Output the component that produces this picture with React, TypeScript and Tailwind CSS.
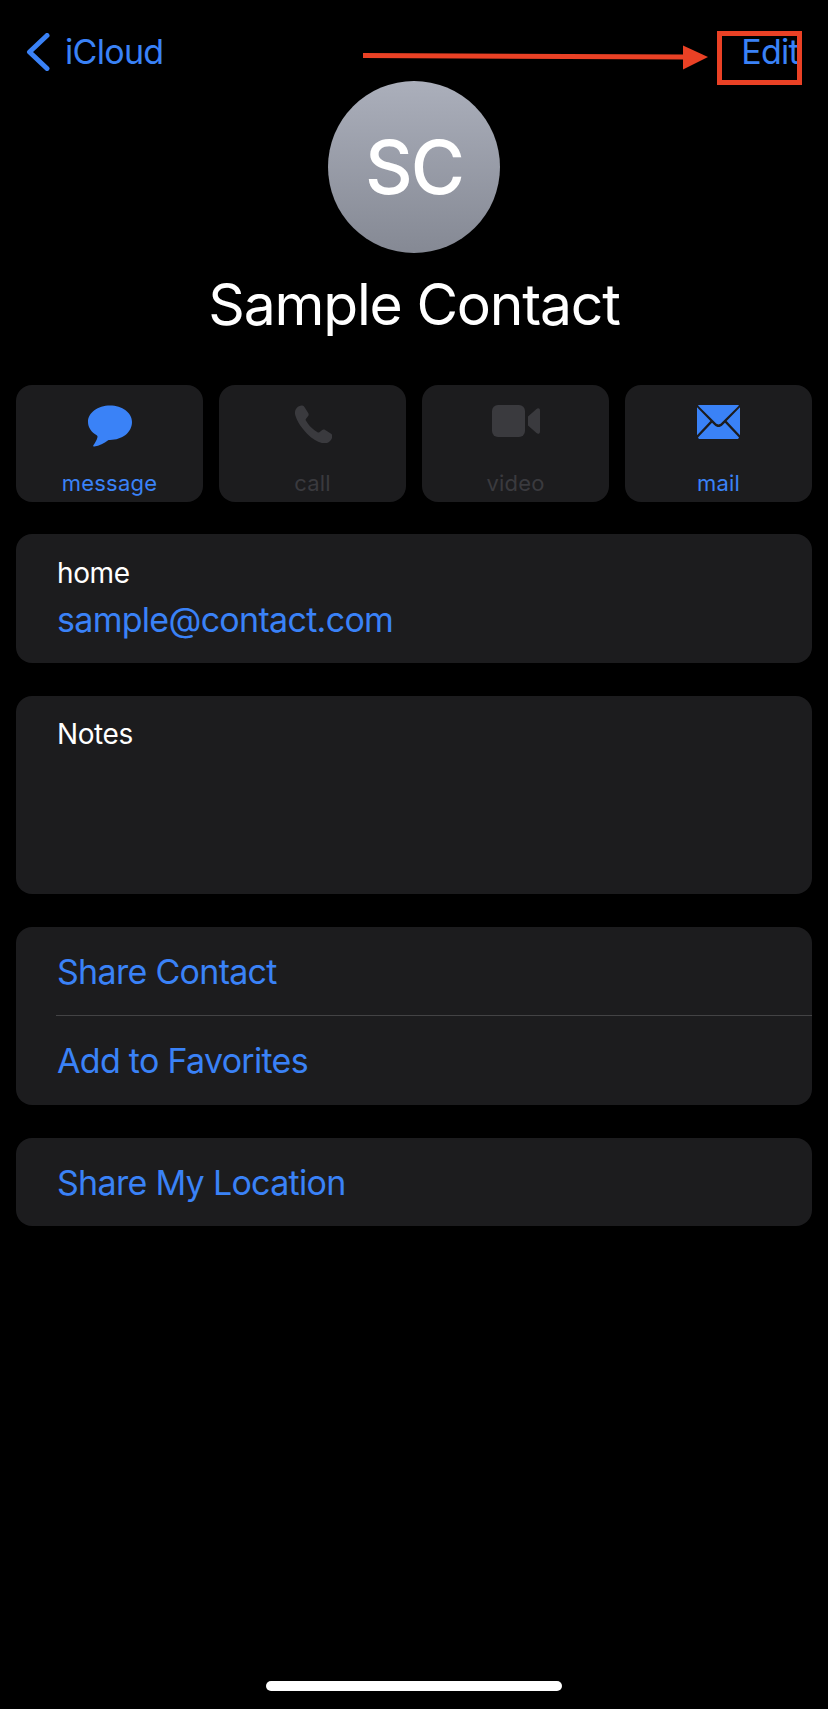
const blue = 'text-[#3a82f7]'

const MessageIcon = () => (
    <svg width="46" height="42" viewBox="0 0 46 42" className="text-[#3a82f7]">
        <path fill="currentColor" d="M23 0.5C10.8 0.5 1 7.6 1 17c0 5.5 3.4 10.3 8.700 13.300 0.800 0.500 1 1.200 0.700 2.200-0.700 2.800-2.800 6-4 7.700-0.500 0.700 0 1.500 0.900 1.300 5-0.900 10-3.400 13.500-6.100 0.500-0.400 1-0.500 2.200-0.500 12.200 0 22-7.400 22-17.900C45 7.600 35.200 0.500 23 0.500z" />
    </svg>
)

const PhoneIcon = () => (
    <svg width="38" height="38" viewBox="0 0 38 38" className="text-[#3a3a3e]">
        <path fill="currentColor" d="M2.500 3.200C4.100 1.400 6.500 0.300 8.300 0.600c1 0.200 1.700 0.800 2.300 1.700l3.600 5.700c0.700 1.100 0.600 2.300-0.200 3.300l-2 2.400c-0.500 0.600-0.500 1.200-0.100 1.900 1.300 2.300 3.100 4.700 5.100 6.700s4.300 3.700 6.500 5c0.700 0.400 1.300 0.400 1.900-0.100l2.500-2c1-0.800 2.200-0.900 3.300-0.200l5.500 3.500c0.900 0.600 1.500 1.300 1.600 2.300 0.200 1.800-0.900 4.200-2.800 5.700-1.800 1.500-3.900 2.100-6.200 1.800-4.900-0.700-10.900-4.300-16-9.400C8 23.700 3 16.500 1.300 10.300 0.600 7.500 1 5 2.500 3.200z" />
    </svg>
)

const VideoIcon = () => (
    <svg width="48" height="32" viewBox="0 0 48 32" className="text-[#3a3a3e]">
        <rect x="0" y="0" width="33" height="32" rx="6" fill="currentColor" />
        <path fill="currentColor" d="M36 11.500L44.500 3.900C46 2.600 48 3.300 48 5.300v21.400c0 2-2 2.700-3.500 1.400L36 20.500z" />
    </svg>
)

const MailIcon = () => (
    <svg width="43" height="34" viewBox="0 0 43 34" className="text-[#3a82f7]">
        <path fill="currentColor" d="M3 0h37c1 0 1.600 0.100 2 0.400L24.300 18c-1 1-1.900 1.400-2.800 1.400s-1.800-0.400-2.800-1.400L1 0.400C1.400 0.100 2 0 3 0z" />
        <path fill="currentColor" d="M0 2.300L13.400 16 0 30.200C0 30 0 29.500 0 29V3.500C0 3 0 2.600 0 2.300zM43 2.300c0 0.300 0 0.700 0 1.200V29c0 0.500 0 1 0 1.200L29.600 16z" />
        <path fill="currentColor" d="M15 17.700l2.300 2.300c1.500 1.400 2.800 2 4.200 2s2.700-0.600 4.200-2l2.300-2.300L42 32.400C41.500 33.700 41 34 40 34H3c-1 0-1.500-0.300-2-1.600z" />
    </svg>
)

const ActionButton = ({ icon, label, active }: { icon: React.ReactNode; label: string; active?: boolean }) => (
    <div className="h-[117px] rounded-[16px] bg-[#1c1c1e] flex flex-col items-center">
        <div className="h-[66px] mt-[20px] flex items-start justify-center">{icon}</div>
        <span className={`text-[22px] leading-[26px] -mt-[1px] tracking-[0.2px] ${active ? blue : 'text-[#3a3a3e]'}`}>{label}</span>
    </div>
)

export default function App() {
    return (
        <div className="relative w-[828px] h-[1709px] bg-black text-white flex flex-col overflow-hidden font-['Inter',sans-serif]">
            {/* Nav bar */}
            <div className="h-[81px] pl-[26px] pr-[29px] pt-[31px] flex items-start justify-between">
                <div className={`flex items-center gap-[15px] ${blue}`}>
                    <svg width="24" height="38" viewBox="0 0 24 38" fill="none" className="-mt-[1px]">
                        <path d="M21 2.500L3.500 19 21 35.500" stroke="currentColor" strokeWidth="5" strokeLinecap="round" strokeLinejoin="round" />
                    </svg>
                    <span className="text-[34px] leading-[42px] tracking-[-0.7px]">iCloud</span>
                </div>
                <span className={`text-[34px] leading-[42px] tracking-[-0.7px] ${blue}`}>Edit</span>
            </div>

            {/* Header */}
            <div className="flex flex-col items-center">
                <div className="w-[172px] h-[172px] rounded-full bg-gradient-to-b from-[#abafbb] to-[#858994] flex items-center justify-center">
                    <span className="text-[74px] leading-none font-medium tracking-[-2px]">SC</span>
                </div>
                <h1 className="mt-[17px] text-[57px] leading-[70px] tracking-[-1.2px]">Sample Contact</h1>
            </div>

            {/* Actions */}
            <div className="mt-[45px] px-[16px] grid grid-cols-4 gap-[16px]">
                <ActionButton icon={<MessageIcon />} label="message" active />
                <ActionButton icon={<PhoneIcon />} label="call" />
                <ActionButton icon={<VideoIcon />} label="video" />
                <ActionButton icon={<MailIcon />} label="mail" active />
            </div>

            <div className="mt-[32px] px-[16px] flex flex-col gap-[33px]">
                <div className="h-[129px] rounded-[16px] bg-[#1c1c1e] pl-[41px] pt-[21px]">
                    <div className="text-[28px] leading-[36px] tracking-[-0.4px]">home</div>
                    <div className={`mt-[8px] text-[34px] leading-[42px] tracking-[-0.7px] ${blue}`}>sample@contact.com</div>
                </div>

                <div className="h-[198px] rounded-[16px] bg-[#1c1c1e] pl-[41px] pt-[20px]">
                    <div className="text-[28px] leading-[36px] tracking-[-0.4px]">Notes</div>
                </div>

                <div className="rounded-[16px] bg-[#1c1c1e] pl-[40px]">
                    <div className={`h-[88px] flex items-center pl-[1px] text-[34px] tracking-[-0.7px] ${blue}`}>Share Contact</div>
                    <div className="h-[1px] bg-[#434345]" />
                    <div className={`h-[89px] flex items-center pl-[1px] text-[34px] tracking-[-0.7px] ${blue}`}>Add to Favorites</div>
                </div>

                <div className="h-[88px] rounded-[16px] bg-[#1c1c1e] pl-[41px] flex items-center">
                    <span className={`text-[34px] tracking-[-0.7px] ${blue}`}>Share My Location</span>
                </div>
            </div>

            {/* Home indicator */}
            <div className="mt-auto mb-[18px] self-center w-[296px] h-[10px] rounded-full bg-white" />

            {/* Red annotation over the nav bar */}
            <div className="absolute left-[717px] top-[31px] w-[85px] h-[54px] border-[5px] border-[#ea4125]" />
            <svg className="absolute left-[360px] top-[40px]" width="350" height="36" viewBox="0 0 350 36">
                <path d="M3 15.500L325 17" stroke="#ea4125" strokeWidth="5" fill="none" />
                <path d="M323 5.500L348 17 323 29.500z" fill="#ea4125" />
            </svg>
        </div>
    )
}
